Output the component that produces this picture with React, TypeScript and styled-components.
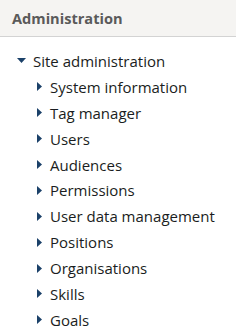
import React from 'react';
import styled, { createGlobalStyle } from 'styled-components';

const GlobalStyle = createGlobalStyle`
    html, body {
        margin: 0;
        padding: 0;
        background: #ffffff;
    }
    body {
        font-family: "Open Sans", "Liberation Sans", sans-serif;
        color: #1a1d21;
    }
`;

const Panel = styled('div')`
    width: 236px;
    height: 328px;
    overflow: hidden;
    background: #ffffff;
`;

const Header = styled('div')`
    height: 37px;
    box-sizing: border-box;
    padding: 0 12px;
    display: flex;
    align-items: center;
    background: #f5f4f2;
    border-bottom: 1px solid #d3d3d3;
`;

const HeaderTitle = styled('h4')`
    margin: 0;
    font-family: "Open Sans", sans-serif;
    font-weight: 700;
    font-size: 14.6px;
    color: #5a5a5a;
`;

const Tree = styled('ul')`
    list-style: none;
    margin: 0;
    padding: 11px 0 0 17px;
`;

const SubTree = styled('ul')`
    list-style: none;
    margin: 0;
    padding: 0 0 0 20px;
`;

const Node = styled('li')`
    display: flex;
    align-items: center;
    height: 25.9px;
    font-size: 15px;
    white-space: nowrap;
`;

const Toggle = styled('span')<{ $open?: boolean }>`
    width: ${(p) => (p.$open ? '16px' : '13px')};
    display: flex;
    align-items: center;
    flex-shrink: 0;
`;

const Arrow = ({ open }: { open?: boolean }) =>
    open ? (
        <svg width="9" height="5" viewBox="0 0 9 5">
            <path d="M0 0 L9 0 L4.5 5 Z" fill="#1b4169" />
        </svg>
    ) : (
        <svg width="5" height="9" viewBox="0 0 5 9">
            <path d="M0 0 L5 4.5 L0 9 Z" fill="#1b4169" />
        </svg>
    );

const items = [
    'System information',
    'Tag manager',
    'Users',
    'Audiences',
    'Permissions',
    'User data management',
    'Positions',
    'Organisations',
    'Skills',
    'Goals',
];

const App = () => {
    return (
        <>
            <GlobalStyle />
            <Panel>
                <Header>
                    <HeaderTitle>Administration</HeaderTitle>
                </Header>
                <Tree>
                    <Node>
                        <Toggle $open>
                            <Arrow open />
                        </Toggle>
                        Site administration
                    </Node>
                    <SubTree>
                        {items.map((item) => (
                            <Node key={item}>
                                <Toggle>
                                    <Arrow />
                                </Toggle>
                                {item}
                            </Node>
                        ))}
                    </SubTree>
                </Tree>
            </Panel>
        </>
    );
};

export default App;
